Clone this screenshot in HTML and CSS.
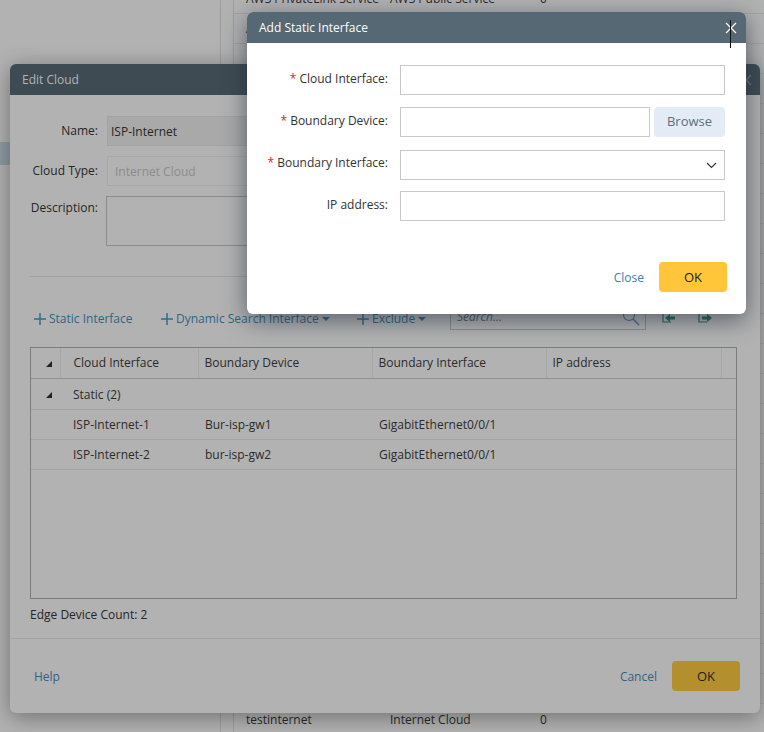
FILE: index.html
```html
<!DOCTYPE html>
<html lang="en">
<head>
<meta charset="utf-8">
<title>Add Static Interface</title>
<link rel="stylesheet" href="styles.css">
</head>
<body>
<div class="stage">
  <div class="backdrop">
    <div class="side"><div class="side-sel"></div></div>
    <div class="gutter"></div>
    <div class="list">
      <div class="list-row"><span class="c1">AWS PrivateLink Service</span><span class="c2">AWS Public Service</span><span>0</span></div>
      <div class="list-row"><span class="c1">AWS</span></div>
      <div class="list-fill"></div>
      <div class="list-row list-last"><span class="c1">testinternet</span><span class="c2">Internet Cloud</span><span>0</span></div>
    </div>
  </div>

  <section class="dlg dlg-edit">
    <header class="dlg-head edit-head"><span>Edit Cloud</span><svg class="x" width="12" height="12" viewBox="0 0 12 12"><path d="M1 1l10 10M11 1L1 11" stroke="#6f7a81" stroke-width="1.2" fill="none"/></svg></header>
    <div class="edit-body">
      <div class="edit-form">
        <label class="e-label">Name:</label><div class="e-input e-name">ISP-Internet</div>
        <label class="e-label">Cloud Type:</label><div class="e-input e-type">Internet Cloud</div>
        <label class="e-label e-top">Description:</label><div class="e-area"></div>
      </div>
      <hr class="rule">
      <div class="toolbar">
        <a class="tool t1"><svg class="plus" width="14" height="14" viewBox="0 0 14 14"><path d="M7 1v12M1 7h12" stroke="#2f6c90" stroke-width="1.5"/></svg>Static Interface</a>
        <a class="tool t2"><svg class="plus" width="14" height="14" viewBox="0 0 14 14"><path d="M7 1v12M1 7h12" stroke="#2f6c90" stroke-width="1.5"/></svg>Dynamic Search Interface<i class="caret"></i></a>
        <a class="tool t3"><svg class="plus" width="14" height="14" viewBox="0 0 14 14"><path d="M7 1v12M1 7h12" stroke="#2f6c90" stroke-width="1.5"/></svg>Exclude<i class="caret"></i></a>
        <div class="search"><span>Search...</span><svg width="18" height="18" viewBox="0 0 18 18"><circle cx="7" cy="7" r="5.5" fill="none" stroke="#4f6f85" stroke-width="1.1"/><path d="M11 11l6 6" stroke="#4f6f85" stroke-width="1.6"/></svg></div>
        <svg class="io io1" width="14" height="12" viewBox="0 0 14 12"><path d="M1 1v9h8" stroke="#2f5f6c" stroke-width="1.2" fill="none"/><path d="M3 6l5-4v2.5h5v3H8V10z" fill="#1f6a50"/></svg>
        <svg class="io" width="14" height="12" viewBox="0 0 14 12"><path d="M1 1v9h8" stroke="#2f5f6c" stroke-width="1.2" fill="none"/><path d="M14 6L9 2v2.5H4v3h5V10z" fill="#1f6a50"/></svg>
      </div>
      <div class="grid-box">
        <table class="grid">
          <colgroup><col class="w0"><col class="w1"><col class="w2"><col class="w3"><col class="w4"><col class="w5"></colgroup>
          <thead>
            <tr><th class="tw"><svg width="6" height="6" viewBox="0 0 6 6"><path d="M6 0v6H0z" fill="#222"/></svg></th><th class="first">Cloud Interface</th><th>Boundary Device</th><th>Boundary Interface</th><th>IP address</th><th></th></tr>
          </thead>
          <tbody>
            <tr class="grp"><td class="tw"><svg width="6" height="6" viewBox="0 0 6 6"><path d="M6 0v6H0z" fill="#222"/></svg></td><td class="first" colspan="5">Static (2)</td></tr>
            <tr><td></td><td class="first">ISP-Internet-1</td><td>Bur-isp-gw1</td><td>GigabitEthernet0/0/1</td><td></td><td></td></tr>
            <tr><td></td><td class="first">ISP-Internet-2</td><td>bur-isp-gw2</td><td>GigabitEthernet0/0/1</td><td></td><td></td></tr>
          </tbody>
        </table>
      </div>
      <p class="count">Edge Device Count: 2</p>
    </div>
    <footer class="edit-foot">
      <a class="link-dim help">Help</a>
      <a class="link-dim cancel">Cancel</a>
      <button class="btn btn-dim" type="button">OK</button>
    </footer>
  </section>

  <section class="dlg dlg-add">
    <header class="dlg-head add-head"><span>Add Static Interface</span><svg class="x" width="12" height="12" viewBox="0 0 12 12"><path d="M1 1l10 10M11 1L1 11" stroke="#fff" stroke-width="1.2" fill="none"/></svg><i class="cursor"></i></header>
    <div class="add-form">
      <label class="a-label"><b>*</b> Cloud Interface:</label><div class="a-input"></div>
      <label class="a-label"><b>*</b> Boundary Device:</label><div class="a-split"><div class="a-input"></div><button class="browse" type="button">Browse</button></div>
      <label class="a-label a-up"><b>*</b> Boundary Interface:</label><div class="a-input a-select"><svg width="11" height="7" viewBox="0 0 11 7"><path d="M1 1l4.5 4.5L10 1" stroke="#333" stroke-width="1.1" fill="none"/></svg></div>
      <label class="a-label">IP address:</label><div class="a-input"></div>
    </div>
    <footer class="add-foot">
      <a class="link">Close</a>
      <button class="btn" type="button">OK</button>
    </footer>
  </section>
</div>
</body>
</html>
```

FILE: styles.css
```css
* { box-sizing: border-box; }
html, body { margin: 0; padding: 0; }
body { font-family: "Open Sans", "Liberation Sans", sans-serif; font-size: 12px; color: #333; background: #b2b2b2; }
.stage { position: relative; width: 764px; height: 732px; overflow: hidden; background: #b2b2b2; }

/* dimmed page behind the dialogs */
.backdrop { display: flex; height: 732px; color: #2a2a2a; }
.side { width: 221px; border-right: 1px solid #9e9e9e; }
.side-sel { height: 23px; margin-top: 142px; background: #8f9ca4; }
.gutter { width: 13px; border-right: 1px solid #9e9e9e; }
.list { flex: 1; display: flex; flex-direction: column; margin-top: -16px; height: 750px; }
.list-row { display: flex; align-items: center; height: 30px; flex: none; padding-left: 12px; border-bottom: 1px solid #a4a4a4; }
.list-last { padding-top: 2px; }
.c1 { width: 144px; }
.c2 { width: 150px; }
.list-fill { flex: 1; background: repeating-linear-gradient(#b2b2b2 0 29px, #a6a6a6 29px 30px); }

/* windows */
.dlg { position: absolute; display: flex; flex-direction: column; border-radius: 6px; }
.dlg-head { display: flex; align-items: center; justify-content: space-between; height: 31px; flex: none; padding-left: 12px; border-radius: 6px 6px 0 0; }
.dlg-edit { left: 10px; top: 64px; width: 750px; height: 649px; background: #b2b2b2; box-shadow: 0 4px 22px rgba(0,0,0,.38); }
.edit-head { background: #3e4b53; color: #b0b4b6; padding-right: 8px; }
.edit-body { flex: 1; padding: 21px 23px 0 20px; }
.edit-form { display: grid; grid-template-columns: 68px 609px; column-gap: 9px; row-gap: 10px; width: 686px; }
.e-label { text-align: right; line-height: 30px; color: #262626; white-space: nowrap; }
.e-top { margin-top: -3px; }
.e-input { height: 30px; line-height: 29px; padding-left: 3px; border: 1px solid #a3a3a3; color: #262626; }
.e-name { background: #a9a9a9; }
.e-type { padding-left: 7px; color: #8c8c8c; border-color: #a8a8a8; }
.e-area { height: 50px; margin-left: -1px; border: 1px solid #8c8c8c; }
.rule { height: 1px; margin: 30px 0 0; border: 0; background: #a1a1a1; }

.toolbar { display: flex; align-items: center; height: 34px; margin-top: 24px; }
.tool { display: flex; align-items: center; color: #2f6585; white-space: nowrap; }
.plus { margin-left: 3px; margin-right: 2px; margin-top: 1px; }
.t1 { width: 127px; }
.t2 { width: 196px; }
.t3 { width: 93px; }
.caret { width: 0; height: 0; margin: 2px 0 0 3px; border: 4px solid transparent; border-top-color: #2f6585; border-bottom: 0; }
.search { display: flex; align-items: flex-end; justify-content: space-between; align-self: flex-start; width: 196px; height: 29px; margin-left: 4px; padding: 0 5px 4px 6px; border: 1px solid #8c8c8c; border-top: 0; font-style: italic; color: #555c60; }
.search svg { margin-bottom: -1px; }
.io { margin-left: 22px; }
.io1 { margin-left: 16px; }

.grid-box { width: 707px; height: 252px; margin-top: 12px; border: 1px solid #7d7d7d; }
.grid { width: 705px; border-collapse: collapse; table-layout: fixed; }
.w0 { width: 29px; }
.w1 { width: 138px; }
.w2 { width: 174px; }
.w3 { width: 174px; }
.w4 { width: 175px; }
.w5 { width: 15px; }
.grid th { height: 30px; padding: 0 0 0 6px; font-weight: 400; text-align: left; color: #2b2b2b; border-bottom: 1px solid #939393; border-right: 1px solid #a6a6a6; }
.grid td { height: 30px; padding: 1px 0 0 7px; color: #2b2b2b; border-bottom: 1px solid #a3a3a3; }
.grid .grp td { height: 31px; }
.grid .tw { padding: 0 0 0 15px; }
.grid .first { padding-left: 13px; }
.grid th:last-child { border-right: 0; }
.count { margin: 8px 0 0; line-height: 16px; color: #262626; }

.edit-foot { display: flex; align-items: center; height: 75px; flex: none; padding: 0 20px 0 24px; border-top: 1px solid #a4a4a4; }
.link-dim { color: #2f6585; }
.help { margin-right: auto; }
.cancel { margin-right: 15px; }
.btn { width: 68px; height: 30px; padding: 0; border: 0; border-radius: 4px; font: 13px "Open Sans", sans-serif; color: #222; background: #ffc63a; }
.btn-dim { background: #b48f2e; }

.dlg-add { left: 247px; top: 12px; width: 499px; height: 302px; background: #fff; box-shadow: 0 6px 24px rgba(25,40,55,.6); }
.add-head { position: relative; background: #566874; color: #fff; padding-right: 9px; }
.cursor { position: absolute; left: 483px; top: 8px; width: 1px; height: 28px; background: #111; }
.add-form { display: grid; grid-template-columns: 141px 325px; grid-template-rows: 42px 43px 41px 30px; column-gap: 12px; padding-top: 22px; }
.a-label { text-align: right; line-height: 27px; color: #333; white-space: nowrap; }
.a-up { margin-top: -1px; }
.a-label b { font-weight: 400; color: #e8202a; }
.a-input { height: 30px; border: 1px solid #c9c9c9; background: #fff; flex: 1; }
.a-split { display: flex; gap: 4px; height: 30px; }
.browse { width: 71px; height: 30px; padding: 0 0 2px; border: 0; border-radius: 4px; background: #e3ebf7; color: #5f6f7c; font: 13px "Open Sans", sans-serif; }
.a-select { display: flex; align-items: center; justify-content: flex-end; padding-right: 7px; }
.add-foot { display: flex; align-items: center; justify-content: flex-end; gap: 15px; margin-top: 41px; padding-right: 19px; }
.link { color: #3f7ba3; }
```
